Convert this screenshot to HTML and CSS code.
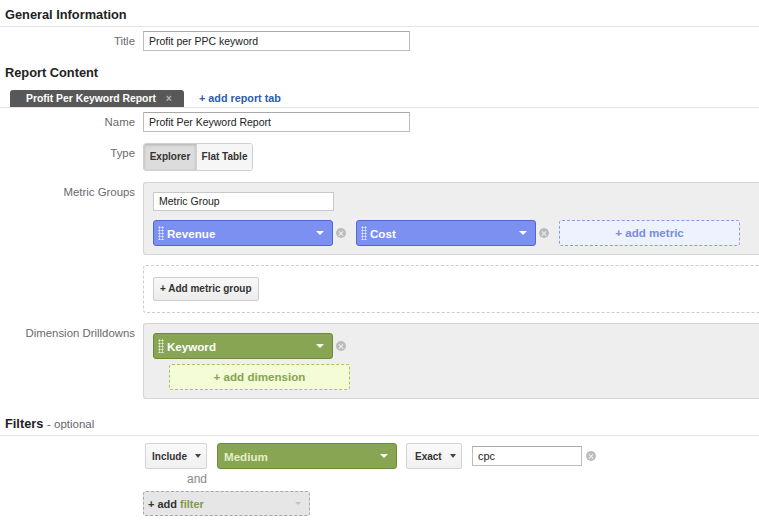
FILE: index.html
```html
<!DOCTYPE html>
<html>
<head>
<meta charset="utf-8">
<link rel="stylesheet" href="styles.css">
</head>
<body>
<div class="page">
  <h2 class="sec-title first">General Information</h2>
  <div class="row row-title">
    <div class="lbl">Title</div>
    <div class="field"><div class="textbox wide">Profit per PPC keyword</div></div>
  </div>

  <h2 class="sec-title plain rc">Report Content</h2>
  <div class="tabs">
    <div class="tab">Profit Per Keyword Report <span class="tab-x">×</span></div>
    <a class="add-tab">+ add report tab</a>
  </div>
  <div class="row row-name">
    <div class="lbl">Name</div>
    <div class="field"><div class="textbox wide">Profit Per Keyword Report</div></div>
  </div>
  <div class="row row-type">
    <div class="lbl">Type</div>
    <div class="field">
      <div class="seg">
        <span class="seg-btn active">Explorer</span><span class="seg-btn">Flat Table</span>
      </div>
    </div>
  </div>
  <div class="row row-metric">
    <div class="lbl">Metric Groups</div>
    <div class="field bleed">
      <div class="panel">
        <div class="textbox group-name">Metric Group</div>
        <div class="chips">
          <div class="chip blue"><span class="grip"></span><span class="chip-text">Revenue</span><span class="caret"></span></div>
          <span class="remove"></span>
          <div class="chip blue"><span class="grip"></span><span class="chip-text">Cost</span><span class="caret"></span></div>
          <span class="remove"></span>
          <div class="add-slot blue-slot">+ add metric</div>
        </div>
      </div>
      <div class="dash-panel">
        <span class="btn">+ Add metric group</span>
      </div>
    </div>
  </div>
  <div class="row row-dim">
    <div class="lbl">Dimension Drilldowns</div>
    <div class="field bleed">
      <div class="panel dim-panel">
        <div class="chips">
          <div class="chip green"><span class="grip"></span><span class="chip-text">Keyword</span><span class="caret"></span></div>
          <span class="remove"></span>
        </div>
        <div class="add-slot green-slot">+ add dimension</div>
      </div>
    </div>
  </div>

  <h2 class="sec-title filters">Filters <span class="opt">- optional</span></h2>
  <div class="filter-area">
    <div class="filter-row">
      <span class="dd include"><span>Include</span><span class="caret dark"></span></span>
      <div class="chip green medium"><span class="chip-text light">Medium</span><span class="caret"></span></div>
      <span class="dd exact"><span>Exact</span><span class="caret dark"></span></span>
      <div class="textbox cpc">cpc</div>
      <span class="remove"></span>
    </div>
    <div class="and">and</div>
    <div class="add-filter">+ add <span class="gr">filter</span><span class="caret pale"></span></div>
  </div>
</div>
</body>
</html>
```

FILE: styles.css
```css
html, body {
  margin: 0;
  padding: 0;
  overflow: hidden;
  background: #fff;
}
body {
  font-family: "Liberation Sans", Arial, sans-serif;
  color: #222;
  width: 759px;
}
.page {
  padding-top: 7px;
}
.sec-title {
  margin: 0;
  padding: 0 5px 3px;
  font-size: 12.8px;
  line-height: 16px;
  font-weight: bold;
  color: #222;
  border-bottom: 1px solid #e4e4e4;
}
.sec-title.plain {
  border-bottom: none;
  padding-bottom: 0;
}
.sec-title.rc { margin-top: 14px; }
.sec-title.filters { margin-top: 17px; }
.opt {
  font-weight: normal;
  font-size: 11.5px;
  color: #666;
}

.row {
  display: grid;
  grid-template-columns: 135px 1fr;
  column-gap: 8px;
}
.lbl {
  text-align: right;
  font-size: 11.4px;
  line-height: 14px;
  padding-top: 3px;
  color: #6a6a6a;
}
.row-title { margin-top: 4px; }
.row-name { margin-top: 4px; }
.row-type { margin-top: 11px; }
.row-metric { margin-top: 11px; }
.row-dim { margin-top: 10px; }

.bleed { margin-right: -12px; }

.textbox {
  box-sizing: border-box;
  height: 20px;
  border: 1px solid #bdbdbd;
  border-top-color: #a9a9a9;
  background: #fff;
  font-size: 10.5px;
  line-height: 18px;
  padding-left: 5px;
  color: #222;
}
.textbox.wide { width: 267px; }

.tabs {
  margin-top: 9px;
  border-bottom: 1px solid #e4e4e4;
  display: flex;
  align-items: flex-end;
  padding-left: 10px;
}
.tab {
  width: 174px;
  height: 17px;
  box-sizing: border-box;
  background: #585858;
  border-radius: 3px 3px 0 0;
  color: #fff;
  font-size: 10.4px;
  font-weight: bold;
  line-height: 17px;
  padding-left: 16px;
}
.tab-x {
  color: #b5b5b5;
  font-weight: bold;
  margin-left: 7px;
}
.add-tab {
  margin-left: 15px;
  color: #2a5db0;
  font-size: 10.8px;
  font-weight: bold;
  line-height: 17px;
}

.seg {
  display: inline-flex;
  height: 28px;
  box-sizing: border-box;
  border: 1px solid #cfcfcf;
  border-radius: 3px;
  overflow: hidden;
}
.seg-btn {
  box-sizing: border-box;
  font-size: 10px;
  font-weight: bold;
  color: #333;
  line-height: 26px;
  text-align: center;
  background: #f6f6f6;
  width: 55px;
}
.seg-btn.active {
  background: #dcdcdc;
  box-shadow: inset 0 1px 3px rgba(0,0,0,.2);
  width: 53px;
  border-right: 1px solid #d0d0d0;
}

.panel {
  background: #eeeeee;
  border: 1px solid #d4d4d4;
  border-right: none;
  border-radius: 3px 0 0 3px;
  padding: 9px 0 8px 9px;
}
.group-name {
  width: 181px;
  height: 19px;
  line-height: 17px;
  border-color: #c8c8c8;
}
.chips {
  display: flex;
  align-items: center;
  margin-top: 9px;
}
.chip {
  box-sizing: border-box;
  width: 180px;
  height: 26px;
  border-radius: 3px;
  display: flex;
  align-items: center;
  padding: 0 8px 0 4px;
  color: #fff;
  font-size: 11.6px;
  font-weight: bold;
}
.chip.blue {
  background: #7c90f2;
  border: 1px solid #5566cf;
}
.chip.green {
  background: #88a553;
  border: 1px solid #6c8a3a;
}
.grip {
  width: 6px;
  height: 14px;
  margin-right: 3px;
  background-image: radial-gradient(circle, rgba(255,255,255,.75) 0.9px, transparent 1.2px);
  background-size: 3px 3px;
}
.chip-text { flex: 1; }
.chip-text.light { color: #e2efc6; }
.caret {
  width: 0;
  height: 0;
  border-left: 4px solid transparent;
  border-right: 4px solid transparent;
  border-top: 4px solid #fff;
}
.caret.dark { border-top-color: #444; border-left-width: 3px; border-right-width: 3px; }
.caret.pale { border-top-color: #c4c4c4; margin-left: auto; border-left-width: 3px; border-right-width: 3px; border-top-width: 3px; }
.remove {
  width: 10px;
  height: 10px;
  border-radius: 50%;
  background: #bcbcbc;
  margin: 0 10px 0 3px;
  position: relative;
  flex: none;
}
.remove::before, .remove::after {
  content: "";
  position: absolute;
  left: 2px;
  top: 4.5px;
  width: 6px;
  height: 1.2px;
  background: #eee;
  transform: rotate(45deg);
}
.remove::after { transform: rotate(-45deg); }

.add-slot {
  box-sizing: border-box;
  width: 181px;
  height: 26px;
  border-radius: 3px;
  text-align: center;
  font-size: 11.6px;
  font-weight: bold;
  line-height: 24px;
}
.blue-slot {
  border: 1px dashed #8a9be0;
  background: #edf2fe;
  color: #7b8ddc;
}
.green-slot {
  border: 1px dashed #a9c268;
  background: #f3fbd7;
  color: #86a452;
  margin-left: 16px;
  margin-top: 5px;
}
.dim-panel { padding-bottom: 8px; }
.dim-panel .chips { margin-top: 0; }

.dash-panel {
  margin-top: 10px;
  border: 1px dashed #cdcdcd;
  border-right: none;
  border-radius: 3px 0 0 3px;
  padding: 11px 0 11px 9px;
}
.btn {
  display: inline-block;
  box-sizing: border-box;
  height: 24px;
  line-height: 22px;
  padding: 0 6px;
  border: 1px solid #cdcdcd;
  border-radius: 2px;
  background: linear-gradient(#f8f8f8, #ececec);
  font-size: 10px;
  font-weight: bold;
  color: #333;
}

.filter-area {
  padding-left: 143px;
  margin-top: 7px;
}
.filter-row {
  display: flex;
  align-items: center;
  margin-left: 2px;
}
.dd {
  box-sizing: border-box;
  height: 26px;
  display: inline-flex;
  align-items: center;
  gap: 8px;
  border: 1px solid #d3d3d3;
  border-radius: 2px;
  background: linear-gradient(#fafafa, #f0f0f0);
  font-size: 10px;
  font-weight: bold;
  color: #333;
  padding: 0 0 0 6px;
  flex: none;
}
.include { width: 62px; }
.exact { width: 56px; margin-left: 9px; padding-left: 8px; }
.chip.medium { margin-left: 10px; padding-left: 6px; }
.textbox.cpc {
  width: 110px;
  height: 20px;
  margin-left: 10px;
  font-size: 11px;
}
.filter-row .remove { margin-left: 4px; }
.and {
  font-size: 12px;
  line-height: 14px;
  color: #888;
  padding-left: 44px;
  margin-top: 3px;
}
.add-filter {
  box-sizing: border-box;
  margin-top: 5px;
  width: 167px;
  height: 25px;
  border: 1px dashed #a8a8a8;
  border-radius: 3px;
  background: #e6e6e6;
  display: flex;
  align-items: center;
  padding: 0 8px 0 4px;
  font-size: 11px;
  font-weight: bold;
  color: #333;
}
.add-filter .gr { color: #7f9c4c; margin-left: 3px; }
```
